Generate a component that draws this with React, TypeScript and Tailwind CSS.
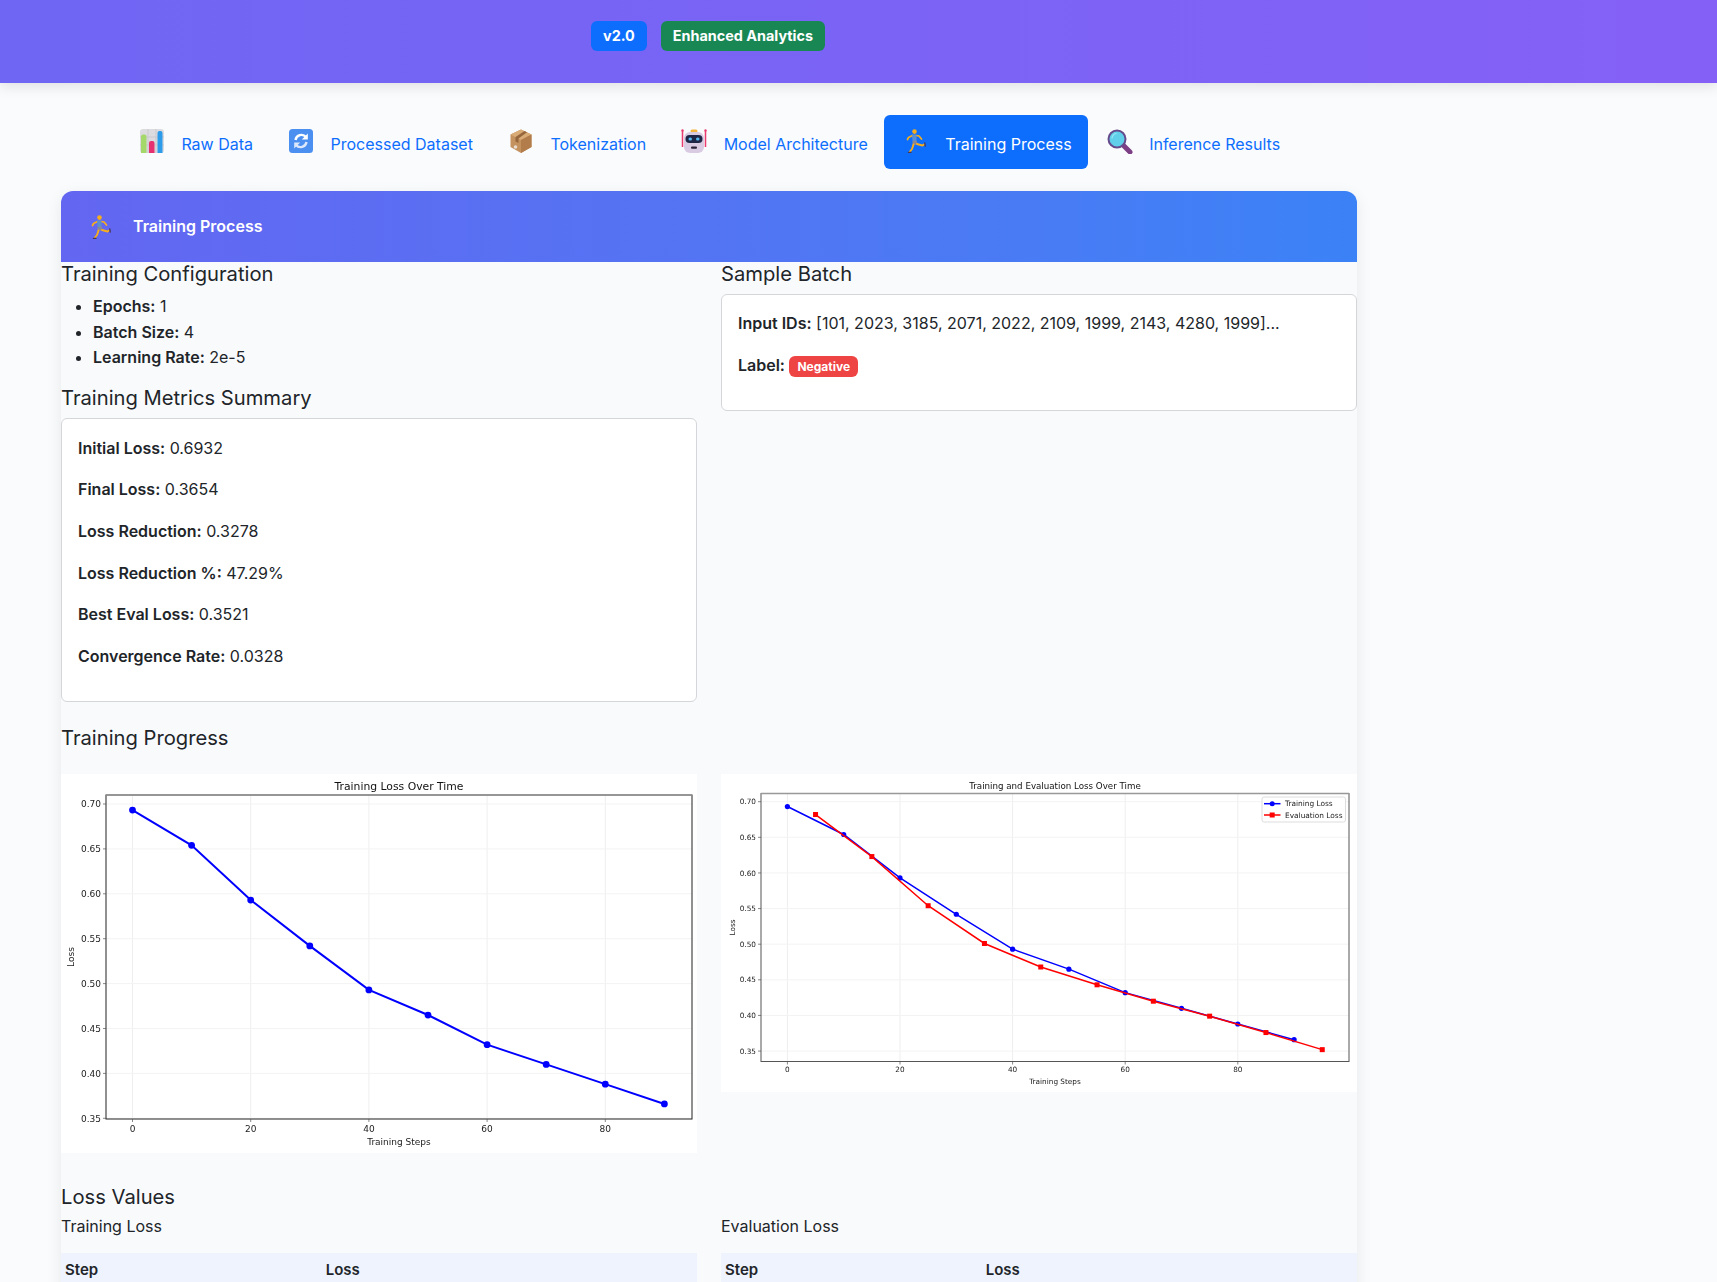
const trainLoss = [0.6932, 0.654, 0.593, 0.542, 0.493, 0.465, 0.432, 0.41, 0.388, 0.366];
const evalLoss = [0.682, 0.623, 0.554, 0.501, 0.468, 0.443, 0.42, 0.399, 0.376, 0.352];
const yTicks = [0.7, 0.65, 0.6, 0.55, 0.5, 0.45, 0.4, 0.35];
const xTicks = [0, 20, 40, 60, 80];

const metrics = [
  ['Initial Loss:', '0.6932'],
  ['Final Loss:', '0.3654'],
  ['Loss Reduction:', '0.3278'],
  ['Loss Reduction %:', '47.29%'],
  ['Best Eval Loss:', '0.3521'],
  ['Convergence Rate:', '0.0328'],
];

const config = [
  ['Epochs:', '1'],
  ['Batch Size:', '4'],
  ['Learning Rate:', '2e-5'],
];

function ChartIcon() {
  return (
    <svg viewBox="0 0 24 24" className="w-6 h-6">
      <rect x="0" y="0" width="24" height="24" rx="3" fill="#dcdce0" />
      <path d="M8 0V24M16 0V24M0 8H24M0 16H24" stroke="#c4c4ca" strokeWidth="0.8" />
      <path d="M1 24V7.500a2 2 0 0 1 2-2h1.500a2 2 0 0 1 2 2V24Z" fill="#a5d86a" />
      <path d="M9 24V14a2 2 0 0 1 2-2h1.500a2 2 0 0 1 2 2V24Z" fill="#e6306f" />
      <path d="M17.500 24V4a2 2 0 0 1 2-2h1a2 2 0 0 1 2 2V24Z" fill="#2b9bea" />
    </svg>
  );
}

function RefreshIcon() {
  return (
    <svg viewBox="0 0 24 24" className="w-6 h-6">
      <rect x="0" y="0" width="24" height="24" rx="3.500" fill="#4b8ff0" />
      <path d="M6.500 11a6 6 0 0 1 10.500-3" fill="none" stroke="#fff" strokeWidth="2.400" />
      <path d="M18.800 4.500V10.500H12.800Z" fill="#fff" />
      <path d="M17.500 13a6 6 0 0 1-10.500 3" fill="none" stroke="#dbe8fb" strokeWidth="2.400" />
      <path d="M5.200 19.500V13.500H11.200Z" fill="#dbe8fb" />
    </svg>
  );
}

function BoxIcon() {
  return (
    <svg viewBox="0 0 24 24" className="w-6 h-6">
      <path d="M12 0.500 22.500 5.500V18L12 24 1.500 18V5.500Z" fill="#c4925f" />
      <path d="M12 0.500 22.500 5.500 12 11 1.500 5.500Z" fill="#d9ab76" />
      <path d="M12 11 22.500 5.500V18L12 24Z" fill="#b27c4b" />
      <path d="M6.500 8V12.500L9.500 14V9.500L18 3.300 15.500 2Z" fill="#96663c" />
      <circle cx="6.500" cy="18" r="1.800" fill="#e8dcd0" />
    </svg>
  );
}

function RobotIcon() {
  return (
    <svg viewBox="0 0 26 24" className="w-[26px] h-6">
      <rect x="9.500" y="0.500" width="7" height="3" rx="1.500" fill="#f5b63c" />
      <path d="M1.500 2V18M24.500 2V18" stroke="#ea3b6f" strokeWidth="1.500" />
      <circle cx="1.500" cy="1.500" r="1.200" fill="#ea3b6f" />
      <circle cx="24.500" cy="1.500" r="1.200" fill="#ea3b6f" />
      <rect x="3" y="3" width="20" height="21" rx="6" fill="#d9cbe2" />
      <rect x="4.500" y="6" width="17" height="8" rx="4" fill="#1d2745" />
      <rect x="7.500" y="8.500" width="3.500" height="3" rx="1.500" fill="#56b8ef" />
      <rect x="15" y="8.500" width="3.500" height="3" rx="1.500" fill="#56b8ef" />
      <rect x="10" y="17.500" width="6" height="2.200" rx="1" fill="#2a2438" />
    </svg>
  );
}

function RunnerIcon() {
  return (
    <svg viewBox="0 0 24 24" className="w-6 h-6">
      <circle cx="10.500" cy="2.600" r="2.300" fill="#f7ae1d" />
      <path d="M8.500 6.500 4.500 8.500 3.500 10.500" fill="none" stroke="#f7ae1d" strokeWidth="1.700" strokeLinecap="round" strokeLinejoin="round" />
      <path d="M12 6.500 15 7 17.500 10" fill="none" stroke="#f7ae1d" strokeWidth="1.700" strokeLinecap="round" strokeLinejoin="round" />
      <path d="M8 5.500 12.500 5.500 12.500 12 8.500 12Z" fill="#5b8fd0" />
      <path d="M8.500 12 12.500 11.500 14 15.500 8.500 16Z" fill="#8a8794" />
      <path d="M9.500 15.500 8 20 6 22.500" fill="none" stroke="#f7ae1d" strokeWidth="1.900" strokeLinecap="round" strokeLinejoin="round" />
      <path d="M13 15 18.500 16.500 20 15.500" fill="none" stroke="#f7ae1d" strokeWidth="1.900" strokeLinecap="round" strokeLinejoin="round" />
      <path d="M4.500 23.500H7M20.800 14 21.200 17" stroke="#4a3550" strokeWidth="1.300" strokeLinecap="round" />
    </svg>
  );
}

function SearchIcon() {
  return (
    <svg viewBox="0 0 26 25" className="w-[26px] h-[25px]">
      <path d="M15.500 15.500 23 23" stroke="#7c3f86" strokeWidth="5" strokeLinecap="round" />
      <circle cx="10" cy="10" r="8.500" fill="#60cfe9" stroke="#654a8c" strokeWidth="2" />
      <path d="M5 9a5.500 5.500 0 0 1 4-4.500" fill="none" stroke="#9be5f5" strokeWidth="1.200" strokeLinecap="round" />
    </svg>
  );
}

const tabs = [
  { label: 'Raw Data', icon: <ChartIcon /> },
  { label: 'Processed Dataset', icon: <RefreshIcon /> },
  { label: 'Tokenization', icon: <BoxIcon /> },
  { label: 'Model Architecture', icon: <RobotIcon /> },
  { label: 'Training Process', icon: <RunnerIcon />, active: true },
  { label: 'Inference Results', icon: <SearchIcon /> },
];

type ChartProps = {
  width: number;
  height: number;
  title: string;
  box: [number, number, number, number];
  x0: number;
  xStep: number;
  y70: number;
  yUnit: number;
  tickSize: number;
  titleSize: number;
  labelSize: number;
  labelOffset: number;
  lineWidth: number;
  dot: number;
  frame: string;
  showEval?: boolean;
};

function LossChart(p: ChartProps) {
  const [left, top, right, bottom] = p.box;
  const sx = (s: number) => p.x0 + p.xStep * s;
  const sy = (v: number) => p.y70 + (0.7 - v) * p.yUnit;
  const trainPts = trainLoss.map((v, i) => [sx(i * 10), sy(v)]);
  const evalPts = evalLoss.map((v, i) => [sx(5 + i * 10), sy(v)]);
  const mid = (left + right) / 2;
  return (
    <div className="bg-white">
      <svg viewBox={`0 0 ${p.width} ${p.height}`} className="block w-full blur-[0.35px]" style={{ height: p.height }} fontFamily="'DejaVu Sans', sans-serif">
        <text x={mid} y={top - 5} textAnchor="middle" fontSize={p.titleSize} fill="#111">{p.title}</text>
        {xTicks.map((t) => (
          <line key={t} x1={sx(t)} x2={sx(t)} y1={top} y2={bottom} stroke="#eeeeee" />
        ))}
        {yTicks.map((t) => (
          <line key={t} x1={left} x2={right} y1={sy(t)} y2={sy(t)} stroke="#f3f3f3" />
        ))}
        <rect x={left} y={top} width={right - left} height={bottom - top} fill="none" stroke={p.frame} strokeWidth="1" />
        <line x1={left} x2={right} y1={top} y2={top} stroke="#999" strokeWidth="1.500" />
        {xTicks.map((t) => (
          <g key={t}>
            <line x1={sx(t)} x2={sx(t)} y1={bottom} y2={bottom + 3} stroke="#555" strokeWidth="0.7" />
            <text x={sx(t)} y={bottom + p.tickSize + 3.5} textAnchor="middle" fontSize={p.tickSize} fill="#222">{t}</text>
          </g>
        ))}
        {yTicks.map((t) => (
          <g key={t}>
            <line x1={left - 3} x2={left} y1={sy(t)} y2={sy(t)} stroke="#555" strokeWidth="0.7" />
            <text x={left - 5} y={sy(t) + p.tickSize * 0.36} textAnchor="end" fontSize={p.tickSize} fill="#222">{t.toFixed(2)}</text>
          </g>
        ))}
        <text x={mid} y={bottom + p.tickSize + p.labelSize + 8} textAnchor="middle" fontSize={p.labelSize} fill="#222">Training Steps</text>
        <text transform={`translate(${left - p.labelOffset} ${(top + bottom) / 2}) rotate(-90)`} textAnchor="middle" fontSize={p.labelSize} fill="#222">Loss</text>
        <polyline points={trainPts.map((q) => q.join(',')).join(' ')} fill="none" stroke="#0000ff" strokeWidth={p.lineWidth} />
        {trainPts.map((q, i) => (
          <circle key={i} cx={q[0]} cy={q[1]} r={p.dot} fill="#0000ff" />
        ))}
        {p.showEval && (
          <>
            <polyline points={evalPts.map((q) => q.join(',')).join(' ')} fill="none" stroke="#ff0000" strokeWidth={p.lineWidth} />
            {evalPts.map((q, i) => (
              <rect key={i} x={q[0] - 2.500} y={q[1] - 2.500} width="5" height="5" fill="#ff0000" />
            ))}
            <rect x="541" y="23" width="83.500" height="25" rx="2" fill="#fff" stroke="#ddd" />
            <line x1="543" x2="559.500" y1="29.700" y2="29.700" stroke="#0000ff" strokeWidth="1.500" />
            <circle cx="551.200" cy="29.700" r="2.500" fill="#0000ff" />
            <text x="564" y="32.300" fontSize="7.400" fill="#222">Training Loss</text>
            <line x1="543" x2="559.500" y1="41" y2="41" stroke="#ff0000" strokeWidth="1.500" />
            <rect x="548.700" y="38.500" width="5" height="5" fill="#ff0000" />
            <text x="564" y="43.600" fontSize="7.400" fill="#222">Evaluation Loss</text>
          </>
        )}
      </svg>
    </div>
  );
}

function StepTable() {
  return (
    <table className="w-full border-collapse">
      <thead>
        <tr className="bg-[#eef3fd] text-left text-[15px] font-semibold">
          <th className="w-[41%] px-1 py-1 font-semibold">Step</th>
          <th className="px-1 py-1 font-semibold">Loss</th>
        </tr>
      </thead>
    </table>
  );
}

export default function App() {
  return (
    <div className="h-[1282px] overflow-hidden bg-[#fafbfd] text-[16px] leading-[25.6px] text-[#212529] font-['Inter',sans-serif]">
      <header className="h-[83px] pl-[591px] pt-[21px] bg-gradient-to-r from-[#6f66f4] to-[#8560f7] shadow-[0_4px_12px_rgba(0,0,0,0.1)]">
        <div className="flex gap-[14px] text-[14.4px] font-bold text-white">
          <span className="flex items-center h-[30px] px-3 rounded-md bg-[#0d6efd]">v2.0</span>
          <span className="flex items-center h-[30px] px-3 rounded-md bg-[#198754]">Enhanced Analytics</span>
        </div>
      </header>

      <main className="w-[1296px] ml-[61px]">
        <nav className="flex justify-center pt-8 pr-[2px]">
          {tabs.map((tab) => (
            <div
              key={tab.label}
              className={tab.active
                ? 'flex h-[54px] items-start px-4 pt-[14px] rounded-md bg-[#0d6efd] text-white'
                : 'flex h-[54px] items-start px-4 pt-[14px] rounded-md text-[#0d6efd]'}
            >
              <span className="flex justify-center w-8 mr-[13.5px]">{tab.icon}</span>
              <span className="mt-[3px]">{tab.label}</span>
            </div>
          ))}
        </nav>

        <section className="mt-[22px] h-[1200px] bg-[#f9fafc] rounded-t-[12px] shadow-[0_4px_16px_rgba(0,0,0,0.08)]">
          <div className="flex items-center h-[71px] pl-[28px] rounded-t-[12px] bg-gradient-to-r from-[#6366f1] to-[#3b82f6] text-white font-semibold">
            <RunnerIcon />
            <span className="ml-5">Training Process</span>
          </div>

          <div className="grid grid-cols-2 gap-x-6">
            <div>
              <h4 className="text-[20.2px] leading-6 font-normal mb-2">Training Configuration</h4>
              <ul className="list-disc pl-8 mb-[15px]">
                {config.map(([k, v]) => (
                  <li key={k}><strong className="font-semibold">{k}</strong> {v}</li>
                ))}
              </ul>
              <h4 className="text-[20.2px] leading-6 font-normal mb-2">Training Metrics Summary</h4>
              <div className="px-4 pt-[17px] pb-4 bg-white border border-[#d4d6d9] rounded-md">
                {metrics.map(([k, v]) => (
                  <p key={k} className="mb-4"><strong className="font-semibold">{k}</strong> {v}</p>
                ))}
              </div>
            </div>
            <div>
              <h4 className="text-[20.2px] leading-6 font-normal mb-2">Sample Batch</h4>
              <div className="px-4 pt-4 pb-[15px] bg-white border border-[#d4d6d9] rounded-md">
                <p className="mb-4"><strong className="font-semibold">Input IDs:</strong> [101, 2023, 3185, 2071, 2022, 2109, 1999, 2143, 4280, 1999]...</p>
                <p className="mb-4">
                  <strong className="font-semibold">Label:</strong>{' '}
                  <span className="px-2 py-[3px] rounded-md bg-[#ef4444] text-[12px] font-bold text-white">Negative</span>
                </p>
              </div>
            </div>
          </div>

          <h4 className="mt-6 mb-2 text-[20.2px] leading-6 font-normal">Training Progress</h4>
          <div className="grid grid-cols-2 gap-x-6 mt-6 items-start">
            <LossChart width={636} height={379} title="Training Loss Over Time" box={[45, 21, 631, 345]} x0={71.5} xStep={5.91} y70={30} yUnit={898} tickSize={9} titleSize={10.8} labelSize={9} labelOffset={32} lineWidth={2} dot={3.4} frame="#222" />
            <LossChart width={636} height={318} title="Training and Evaluation Loss Over Time" box={[40, 19.5, 628, 287.5]} x0={66.4} xStep={5.63} y70={27.7} yUnit={712.5} tickSize={7.3} titleSize={8.7} labelSize={7.3} labelOffset={26} lineWidth={1.5} dot={2.6} frame="#555" showEval />
          </div>

          <h4 className="mt-8 mb-[5px] text-[20.2px] leading-6 font-normal">Loss Values</h4>
          <div className="grid grid-cols-2 gap-x-6">
            <div>
              <h5 className="mb-[15px] text-[16px] leading-6 font-normal">Training Loss</h5>
              <StepTable />
            </div>
            <div>
              <h5 className="mb-[15px] text-[16px] leading-6 font-normal">Evaluation Loss</h5>
              <StepTable />
            </div>
          </div>
        </section>
      </main>
    </div>
  );
}
